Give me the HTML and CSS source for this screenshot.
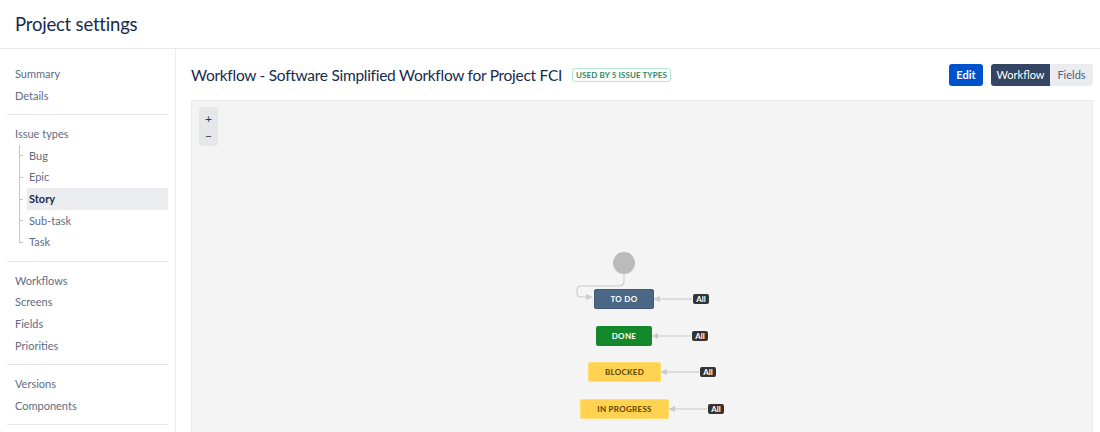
FILE: index.html
```html
<!DOCTYPE html>
<html>
<head>
<meta charset="utf-8">
<link rel="stylesheet" href="styles.css">
</head>
<body>
<header class="page-header">
  <h1 class="page-title">Project settings</h1>
</header>
<div class="layout">
  <nav class="sidebar">
    <div class="nav-group">
      <a class="nav-item">Summary</a>
      <a class="nav-item">Details</a>
    </div>
    <div class="nav-group">
      <a class="nav-item">Issue types</a>
      <div class="tree">
        <a class="tree-item">Bug</a>
        <a class="tree-item">Epic</a>
        <a class="tree-item active">Story</a>
        <a class="tree-item">Sub-task</a>
        <a class="tree-item last">Task</a>
      </div>
    </div>
    <div class="nav-group">
      <a class="nav-item">Workflows</a>
      <a class="nav-item">Screens</a>
      <a class="nav-item">Fields</a>
      <a class="nav-item">Priorities</a>
    </div>
    <div class="nav-group">
      <a class="nav-item">Versions</a>
      <a class="nav-item">Components</a>
    </div>
  </nav>
  <main class="content">
    <div class="title-row">
      <h2 class="wf-title">Workflow - Software Simplified Workflow for Project FCI</h2>
      <span class="lozenge">USED BY 5 ISSUE TYPES</span>
      <div class="actions">
        <button class="btn btn-primary">Edit</button>
        <div class="toggle">
          <button class="btn toggle-on">Workflow</button>
          <button class="btn toggle-off">Fields</button>
        </div>
      </div>
    </div>
    <div class="canvas">
      <div class="zoom">
        <span class="zoom-btn">+</span>
        <span class="zoom-btn">&minus;</span>
      </div>
      <svg class="edges" width="900" height="340" viewBox="0 0 900 340">
        <g fill="none" stroke="#cccccc" stroke-width="1.2">
          <path d="M432 173 V180 Q432 185 427 185 H389 Q385 185 385 189 V192 Q385 196 389 196 H396"/>
          <path d="M500 198 H468"/>
          <path d="M499 235 H466"/>
          <path d="M507 271 H475"/>
          <path d="M515 308 H483"/>
        </g>
        <g fill="#cccccc">
          <path d="M401 196 L394 193 L394 199 Z"/>
          <path d="M461 198 L468 195 L468 201 Z"/>
          <path d="M459 235 L466 232 L466 238 Z"/>
          <path d="M468 271 L475 268 L475 274 Z"/>
          <path d="M476 308 L483 305 L483 311 Z"/>
        </g>
        <circle cx="432" cy="162" r="11" fill="#bbbbbb"/>
      </svg>
      <div class="node todo" style="left:402px;top:188px;width:60px">TO DO</div>
      <div class="node done" style="left:404px;top:225px;width:56px">DONE</div>
      <div class="node prog" style="left:396px;top:261px;width:73px">BLOCKED</div>
      <div class="node prog" style="left:388px;top:298px;width:89px">IN PROGRESS</div>
      <span class="all" style="left:501px;top:193px">All</span>
      <span class="all" style="left:500px;top:230px">All</span>
      <span class="all" style="left:508px;top:266px">All</span>
      <span class="all" style="left:516px;top:303px">All</span>
    </div>
  </main>
</div>
</body>
</html>
```

FILE: styles.css
```css
* { box-sizing: border-box; }
html, body {
  margin: 0;
  padding: 0;
  background: #ffffff;
  font-family: Lato, "Open Sans", "Liberation Sans", sans-serif;
  color: #172b4d;
  overflow: hidden;
}
.page-header {
  height: 49px;
  border-bottom: 1px solid #e6e8ec;
  display: flex;
  align-items: center;
  padding-left: 15px;
}
.page-title {
  margin: 0;
  font-size: 18.5px;
  font-weight: 400;
  color: #172b4d;
  letter-spacing: -0.2px;
}
.layout {
  display: flex;
  height: 383px;
}
.sidebar {
  width: 176px;
  flex: none;
  border-right: 1px solid #ebecf0;
  padding: 14px 7px 0 7px;
}
.nav-group {
  border-bottom: 1px solid #e3e5e9;
  padding: 0 0 8px;
  margin-bottom: 7.6px;
}
.nav-item, .tree-item {
  display: block;
  font-size: 11px;
  line-height: 21.67px;
  color: #5e6c84;
  padding-left: 8px;
}
.tree {
  margin-left: 12px;
  position: relative;
}
.tree-item {
  position: relative;
  padding-left: 10px;
}
.tree-item::before {
  content: "";
  position: absolute;
  left: 0;
  top: 0;
  bottom: 0;
  border-left: 1px solid #c1c7d0;
}
.tree-item.last::before { bottom: 50%; }
.tree-item::after {
  content: "";
  position: absolute;
  left: 0;
  top: 50%;
  width: 4px;
  border-top: 1px solid #c1c7d0;
}
.tree-item.active {
  background: #ebecf0;
  color: #172b4d;
  font-weight: 700;
  margin-left: 8px;
  padding-left: 2px;
}
.tree-item.active::before { left: -8px; }
.tree-item.active::after { left: -8px; }
.content {
  flex: 1;
  padding: 14px 7px 0 15px;
}
.title-row {
  display: flex;
  align-items: center;
  height: 23px;
  margin-bottom: 14px;
}
.wf-title {
  margin: 0;
  font-size: 15.5px;
  font-weight: 400;
  letter-spacing: -0.28px;
  color: #172b4d;
}
.lozenge {
  margin-left: 10px;
  border: 1px solid #b3e6cf;
  border-radius: 3px;
  color: #1f8a6a;
  font-size: 8px;
  font-weight: 700;
  padding: 1px 3px;
  line-height: 10px;
  letter-spacing: 0.1px;
}
.actions {
  margin-left: auto;
  display: flex;
  gap: 8px;
}
.btn {
  font-family: inherit;
  border: 0;
  height: 22px;
  font-size: 11px;
  padding: 0;
  border-radius: 3px;
  cursor: pointer;
}
.btn-primary {
  background: #0052cc;
  color: #fff;
  font-weight: 700;
  width: 34px;
}
.toggle { display: flex; }
.toggle-on {
  background: #344563;
  color: #fff;
  border-radius: 3px 0 0 3px;
  width: 59px;
}
.toggle-off {
  background: #ebecf0;
  color: #505f79;
  border-radius: 0 3px 3px 0;
  width: 43px;
}
.canvas {
  position: relative;
  height: 340px;
  background: #f4f4f4;
  border: 1px solid #ebebeb;
  overflow: hidden;
}
.zoom {
  position: absolute;
  left: 7px;
  top: 6px;
  width: 19px;
  height: 39px;
  background: #e6e7ea;
  border-radius: 3px;
  display: flex;
  flex-direction: column;
  align-items: center;
  padding-top: 3px;
}
.zoom-btn {
  font-size: 12px;
  line-height: 17px;
  color: #253858;
}
.edges {
  position: absolute;
  left: 0;
  top: 0;
}
.node {
  position: absolute;
  height: 20px;
  border-radius: 2px;
  font-size: 8px;
  font-weight: 700;
  display: flex;
  align-items: center;
  justify-content: center;
  letter-spacing: 0.3px;
}
.todo { background: #4a6785; color: #fff; border: 1px solid #3e5a77; }
.done { background: #14892c; color: #fff; }
.prog { background: #ffd351; color: #594300; border: 1px solid #ffdd70; }
.all {
  position: absolute;
  width: 16px;
  height: 10px;
  background: #333;
  border-radius: 2px;
  color: #fff;
  font-size: 8px;
  font-weight: 700;
  line-height: 10px;
  text-align: center;
}
```
